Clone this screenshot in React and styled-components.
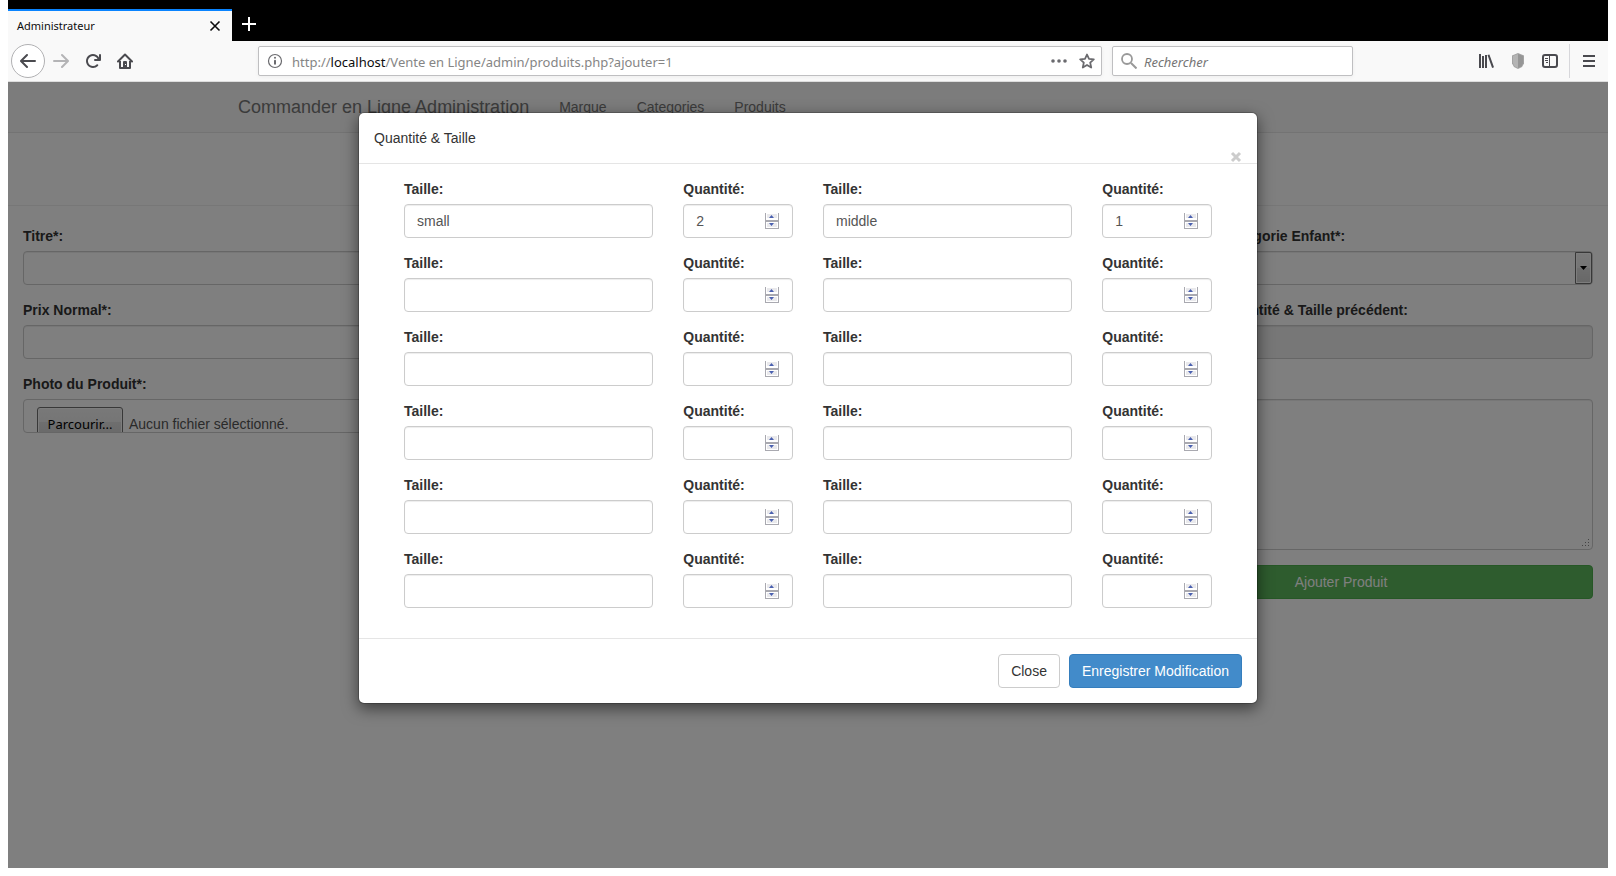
import React from "react";
import styled, { createGlobalStyle } from "styled-components";

const GlobalStyle = createGlobalStyle`
  *, *::before, *::after { box-sizing: border-box; }
  body {
    margin: 0;
    background: #fff;
    color: #333;
    font-family: "Liberation Sans", Arial, sans-serif;
    font-size: 14px;
    line-height: 20px;
  }
  button, input, select, textarea { font: inherit; margin: 0; }
`;

const Browser = styled.div`
  display: flex;
  flex-direction: column;
  min-height: calc(100vh - 8px);
  margin: 0 8px 8px;
`;

/* Browser chrome */

const TabStrip = styled.div`
  display: flex;
  height: 41px;
  padding-top: 9px;
  background: #000;
`;

const Tab = styled.div`
  display: flex;
  align-items: center;
  justify-content: space-between;
  width: 224px;
  padding: 0 11px 0 9px;
  border-top: 2px solid #0a84ff;
  background: #f9f9f9;
  color: #0c0c0d;
  font-family: "Noto Sans", sans-serif;
  font-size: 11px;
`;

const BareButton = styled.button`
  display: flex;
  align-items: center;
  justify-content: center;
  padding: 0;
  border: 0;
  background: none;
  color: inherit;
`;

const NewTabButton = styled(BareButton)`
  width: 34px;
  height: 30px;
  color: #fff;
`;

const Toolbar = styled.div`
  display: flex;
  align-items: center;
  height: 41px;
  padding: 0 3px;
  border-bottom: 1px solid #ddd;
  background: #f9f9f9;
  color: #4a4a4f;
`;

const ToolButton = styled(BareButton)`
  flex: none;
  width: 32px;
  height: 32px;
  color: ${(p) => (p.$dim ? "#b4b4b6" : "#4a4a4f")};
`;

const BackButton = styled(ToolButton)`
  width: 34px;
  height: 34px;
  border: 1px solid #b1b1b3;
  border-radius: 50%;
  background: #fff;
`;

const Spacer = styled.div`
  flex: 0 1 117px;
`;

const Separator = styled.div`
  width: 1px;
  height: 34px;
  margin: 0 3px;
  background: #d7d7db;
`;

const AddressBox = styled.div`
  display: flex;
  align-items: center;
  height: 30px;
  border: 1px solid #bfbfc1;
  border-radius: 2px;
  background: #fff;
  box-shadow: 0 1px 4px rgba(0, 0, 0, 0.05);
  font-family: "Noto Sans", sans-serif;
`;

const UrlBox = styled(AddressBox)`
  flex: 1;
  gap: 9px;
  padding: 0 6px 0 8px;
  color: #6a6a6e;
`;

const UrlActions = styled.div`
  display: flex;
  gap: 12px;
`;

const UrlText = styled.div`
  flex: 1;
  padding-top: 2px;
  color: #858585;
  font-size: 13px;
  white-space: nowrap;

  b {
    color: #0c0c0d;
    font-weight: 400;
  }
`;

const SearchBox = styled(AddressBox)`
  flex: 0 1 241px;
  gap: 7px;
  margin-left: 10px;
  padding: 0 8px;
  color: #999;
`;

const SearchInput = styled.input`
  flex: 1;
  min-width: 0;
  padding: 2px 0 0;
  border: 0;
  outline: 0;
  background: none;
  font-size: 13px;
  font-style: italic;

  &::placeholder { color: #757575; opacity: 1; }
`;

/* Page */

const Page = styled.main`
  position: relative;
  flex: 1;
  background: #fff;
`;

const Navbar = styled.nav`
  border-bottom: 1px solid #e7e7e7;
  background: #f8f8f8;
`;

const NavInner = styled.div`
  display: flex;
  max-width: 1170px;
  margin: 0 auto;
`;

const NavLink = styled.a`
  padding: 15px;
  color: #777;
  font-size: ${(p) => (p.$brand ? "18px" : "14px")};
  text-decoration: none;
`;

const HeadingBand = styled.header`
  height: 73px;
  border-bottom: 1px solid #eee;
`;

const ProductForm = styled.form`
  display: grid;
  grid-template-columns: repeat(4, 1fr);
  padding-top: 20px;
`;

const Field = styled.div`
  grid-column: ${(p) => p.$column || "auto"};
  min-width: 0;
  padding: ${(p) => (p.$unlabelled ? "25px 15px 0" : "0 15px")};
  margin-bottom: 15px;
`;

const Label = styled.label`
  display: block;
  margin-bottom: 5px;
  font-weight: 700;
`;

const Input = styled.input`
  display: block;
  width: 100%;
  height: 34px;
  padding: 6px 12px;
  border: 1px solid #ccc;
  border-radius: 4px;
  outline: 0;
  background: ${(p) => (p.readOnly ? "#eee" : "#fff")};
  box-shadow: inset 0 1px 1px rgba(0, 0, 0, 0.075);
  color: #555;
  appearance: textfield;

  &::-webkit-inner-spin-button { appearance: none; margin: 0; }
`;

const TextArea = styled(Input)`
  height: 151px;
  resize: none;
`;

const Overlaid = styled.div`
  position: relative;
`;

const SelectArrow = styled.span`
  position: absolute;
  top: 1px;
  right: 1px;
  display: flex;
  align-items: center;
  justify-content: center;
  width: 17px;
  height: 32px;
  border: 1px solid #707070;
  border-radius: 0 2px 2px 0;
  background: linear-gradient(#f2f2f2, #ebebeb 50%, #ddd 50%, #cfcfcf);
  box-shadow: inset 0 0 0 1px #fafafa;
  color: #000;
  pointer-events: none;
`;

const Grip = styled.svg`
  position: absolute;
  right: 3px;
  bottom: 3px;
`;

const FilePicker = styled.div`
  display: flex;
  gap: 6px;
  height: 34px;
  padding: 7px 13px 0;
  border: 1px solid #ccc;
  border-radius: 4px;
  overflow: hidden;
  color: #555;
  line-height: 34px;
`;

const FileInput = styled.input`
  position: absolute;
  width: 1px;
  height: 1px;
  opacity: 0;
`;

const FileButton = styled.label`
  flex: none;
  width: 86px;
  height: 34px;
  border: 1px solid #707070;
  border-radius: 3px;
  background: linear-gradient(#f2f2f2, #ebebeb 45%, #ddd 45%, #cfcfcf);
  box-shadow: inset 0 0 0 1px #fafafa;
  color: #000;
  font-family: "Noto Sans", sans-serif;
  font-size: 13px;
  line-height: 32px;
  text-align: center;
`;

const Button = styled.button`
  height: 34px;
  padding: 6px 12px;
  border: 1px solid ${(p) => p.$border};
  border-radius: 4px;
  background: ${(p) => p.$fill};
  color: ${(p) => p.$ink || "#fff"};
  white-space: nowrap;
`;

const SubmitRow = styled.div`
  display: flex;
  grid-column: 1 / -1;
  justify-content: flex-end;
  padding: 0 15px;
`;

const SubmitButton = styled(Button)`
  flex: 0 1 504px;
`;

/* Dialog */

const Backdrop = styled.div`
  position: absolute;
  inset: 0;
  padding: 30px 10px;
  background: rgba(0, 0, 0, 0.5);
`;

const Dialog = styled.section`
  max-width: 900px;
  margin: 0 auto;
  border: 1px solid rgba(0, 0, 0, 0.2);
  border-radius: 6px;
  background: #fff;
  background-clip: padding-box;
  box-shadow: 0 5px 15px rgba(0, 0, 0, 0.5);
`;

const DialogHeader = styled.header`
  display: flex;
  align-items: flex-start;
  justify-content: space-between;
  height: 51px;
  padding: 15px;
  border-bottom: 1px solid #e5e5e5;
`;

const DialogTitle = styled.h4`
  margin: 0;
  font-size: 14px;
  font-weight: 400;
`;

const DialogClose = styled(BareButton)`
  width: 12px;
  height: 22px;
  margin-top: 18px;
  color: #ccc;
`;

const SizeGrid = styled.div`
  display: grid;
  grid-template-columns: 2fr 1fr 2fr 1fr;
  padding: 15px 30px;
`;

const DialogFooter = styled.footer`
  display: flex;
  justify-content: flex-end;
  gap: 9px;
  padding: 15px;
  border-top: 1px solid #e5e5e5;
`;

const Spinner = styled.svg`
  position: absolute;
  top: 9px;
  right: 14px;
  pointer-events: none;
`;

const Icon = ({ size = 16, children }) => (
  <svg width={size} height={size} viewBox="0 0 16 16" fill="currentColor" aria-hidden="true">
    {children}
  </svg>
);

const SpinArrows = () => (
  <Spinner width="14" height="16" viewBox="0 0 14 16" aria-hidden="true">
    <path d="M0 0h14v16H0z" fill="#a9a9b0" />
    <path d="M1 0h12v7H1zM1 9h12v6H1z" fill="#fff" />
    <path d="M2 1h10v4H2zM2 10h10v4H2z" fill="#e9e9ec" />
    <path d="M4 5l2.500-3l2.500 3zM4 10h5l-2.500 3z" fill="#4a60b0" />
  </Spinner>
);

const TextField = ({ id, label, column, children, ...rest }) => (
  <Field $column={column}>
    <Label htmlFor={id}>{label}</Label>
    {children || <Input id={id} {...rest} />}
  </Field>
);

const sizes = [
  { size: "small", qty: "2" },
  { size: "middle", qty: "1" },
  ...Array.from({ length: 10 }, () => ({ size: "", qty: "" })),
];

export default function App() {
  return (
    <Browser>
      <GlobalStyle />
      <TabStrip>
        <Tab>
          <span>Administrateur</span>
          <BareButton aria-label="Fermer l’onglet">
            <svg width="12" height="12" viewBox="0 0 12 12" stroke="currentColor" strokeWidth="1.600" aria-hidden="true">
              <path d="M1.500 1.500l9 9M10.500 1.500l-9 9" />
            </svg>
          </BareButton>
        </Tab>
        <NewTabButton aria-label="Nouvel onglet">
          <svg width="14" height="14" viewBox="0 0 14 14" stroke="currentColor" strokeWidth="2" aria-hidden="true">
            <path d="M7 0v14M0 7h14" />
          </svg>
        </NewTabButton>
      </TabStrip>

      <Toolbar>
        <BackButton aria-label="Précédent">
          <Icon>
            <path d="M15 7H3.414l4.293-4.293a1 1 0 0 0-1.414-1.414l-6 6a1 1 0 0 0 0 1.414l6 6a1 1 0 0 0 1.414-1.414L3.414 9H15a1 1 0 0 0 0-2z" />
          </Icon>
        </BackButton>
        <ToolButton $dim aria-label="Suivant">
          <Icon>
            <path d="M15.707 7.293l-6-6a1 1 0 0 0-1.414 1.414L12.586 7H1a1 1 0 0 0 0 2h11.586l-4.293 4.293a1 1 0 1 0 1.414 1.414l6-6a1 1 0 0 0 0-1.414z" />
          </Icon>
        </ToolButton>
        <ToolButton aria-label="Actualiser">
          <Icon>
            <path d="M15 1a1 1 0 0 0-1 1v2.418A6.995 6.995 0 1 0 8 15a6.954 6.954 0 0 0 4.950-2.050 1 1 0 0 0-1.414-1.414A5.019 5.019 0 1 1 12.549 6H10a1 1 0 0 0 0 2h5a1 1 0 0 0 1-1V2a1 1 0 0 0-1-1z" />
          </Icon>
        </ToolButton>
        <ToolButton aria-label="Accueil">
          <Icon>
            <path d="M1 8.500l7-7 7 7" fill="none" stroke="currentColor" strokeWidth="2" strokeLinecap="round" strokeLinejoin="round" />
            <path d="M3 8v7h10V8" fill="none" stroke="currentColor" strokeWidth="2" strokeLinejoin="round" />
            <path fillRule="evenodd" d="M6 15V9a1 1 0 0 1 1-1h2a1 1 0 0 1 1 1v6zM8 11v1h1v-1z" />
          </Icon>
        </ToolButton>
        <Spacer />
        <UrlBox>
          <Icon>
            <circle cx="8" cy="8" r="6.500" fill="none" stroke="currentColor" strokeWidth="1.200" />
            <circle cx="8" cy="4.800" r="1" />
            <rect x="7" y="6.800" width="2" height="5" rx="1" />
          </Icon>
          <UrlText>
            http://<b>localhost</b>/Vente en Ligne/admin/produits.php?ajouter=1
          </UrlText>
          <UrlActions>
            <BareButton aria-label="Actions de la page">
              <Icon>
                <circle cx="2" cy="8" r="1.800" />
                <circle cx="8" cy="8" r="1.800" />
                <circle cx="14" cy="8" r="1.800" />
              </Icon>
            </BareButton>
            <BareButton aria-label="Marquer cette page">
              <Icon>
                <path d="M8 1.500l2 4.400 4.800.5-3.600 3.200 1 4.900L8 12l-4.200 2.500 1-4.900L1.200 6.400 6 5.900z" fill="none" stroke="currentColor" strokeWidth="1.800" strokeLinejoin="round" />
              </Icon>
            </BareButton>
          </UrlActions>
        </UrlBox>
        <SearchBox>
          <Icon>
            <circle cx="6" cy="6" r="5" fill="none" stroke="currentColor" strokeWidth="1.800" />
            <path d="M10 10l5.500 5.500" stroke="currentColor" strokeWidth="2" />
          </Icon>
          <SearchInput type="text" aria-label="Rechercher" placeholder="Rechercher" />
        </SearchBox>
        <Spacer />
        <ToolButton aria-label="Bibliothèque">
          <Icon>
            <path d="M1 1h2v14H1zM4 3h2v12H4zM7 2h2v13H7zM9.500 2l1.900-.6L16 14.200l-1.900.7z" />
          </Icon>
        </ToolButton>
        <ToolButton aria-label="Protection">
          <Icon>
            <path d="M8 0l6 2.500v8L12 14l-4 2-4-2-2-3.500v-8z" fill="#a3a3a3" />
            <path d="M8 1v14l-3.500-1.700L3 10V3z" fill="#b4b4b4" />
            <path d="M8 1v14l3.500-1.700L13 10V3z" fill="#969696" />
          </Icon>
        </ToolButton>
        <ToolButton aria-label="Panneaux latéraux">
          <Icon>
            <rect x="1" y="2" width="14" height="12" rx="2" fill="none" stroke="currentColor" strokeWidth="2" />
            <path d="M7 2h1v12H7zM3 5h3v1H3zM3 7h3v1H3zM4 9h2v1H4z" />
          </Icon>
        </ToolButton>
        <Separator />
        <ToolButton aria-label="Menu">
          <Icon>
            <path d="M2 2h12v2H2zM2 7h12v2H2zM2 12h12v2H2z" />
          </Icon>
        </ToolButton>
      </Toolbar>

      <Page>
        <Navbar>
          <NavInner>
            <NavLink $brand href="#accueil">Commander en Ligne Administration</NavLink>
            <NavLink href="#marque">Marque</NavLink>
            <NavLink href="#categories">Categories</NavLink>
            <NavLink href="#produits">Produits</NavLink>
          </NavInner>
        </Navbar>
        <HeadingBand />
        <ProductForm>
          <TextField id="titre" label="Titre*:" column="1" />
          <TextField id="enfant" label="Catégorie Enfant*:" column="4">
            <Overlaid>
              <Input as="select" id="enfant" />
              <SelectArrow>
                <svg width="7" height="4" viewBox="0 0 7 4" aria-hidden="true">
                  <path d="M0 0h7L3.500 4z" />
                </svg>
              </SelectArrow>
            </Overlaid>
          </TextField>
          <TextField id="prix" label="Prix Normal*:" column="1" />
          <TextField id="precedent" label="Quantité & Taille précédent:" column="4" readOnly />
          <TextField id="photo" label="Photo du Produit*:" column="1">
            <FilePicker>
              <FileInput id="photo" type="file" />
              <FileButton htmlFor="photo">Parcourir...</FileButton>
              <span>Aucun fichier sélectionné.</span>
            </FilePicker>
          </TextField>
          <Field $column="3 / 5" $unlabelled>
            <Overlaid>
              <TextArea as="textarea" aria-label="Description" />
              <Grip width="8" height="8" viewBox="0 0 8 8" fill="#888" aria-hidden="true">
                <path d="M6 0h1v1H6zM6 3h1v1H6zM3 3h1v1H3zM6 6h1v1H6zM3 6h1v1H3zM0 6h1v1H0z" />
              </Grip>
            </Overlaid>
          </Field>
          <SubmitRow>
            <SubmitButton type="button" $fill="#5cb85c" $border="#4cae4c">Ajouter Produit</SubmitButton>
          </SubmitRow>
        </ProductForm>

        <Backdrop>
          <Dialog role="dialog" aria-labelledby="dialog-title">
            <DialogHeader>
              <DialogTitle id="dialog-title">Quantité &amp; Taille</DialogTitle>
              <DialogClose aria-label="Fermer">
                <svg width="12" height="12" viewBox="0 0 12 12" stroke="currentColor" strokeWidth="3" aria-hidden="true">
                  <path d="M2 2l8 8M10 2l-8 8" />
                </svg>
              </DialogClose>
            </DialogHeader>
            <SizeGrid>
              {sizes.map(({ size, qty }, i) => (
                <React.Fragment key={i}>
                  <TextField id={`taille-${i}`} label="Taille:" type="text" defaultValue={size} />
                  <TextField id={`quantite-${i}`} label="Quantité:">
                    <Overlaid>
                      <Input id={`quantite-${i}`} type="number" min="0" defaultValue={qty} />
                      <SpinArrows />
                    </Overlaid>
                  </TextField>
                </React.Fragment>
              ))}
            </SizeGrid>
            <DialogFooter>
              <Button type="button" $fill="#fff" $border="#ccc" $ink="#333">Close</Button>
              <Button type="button" $fill="#428bca" $border="#357ebd">Enregistrer Modification</Button>
            </DialogFooter>
          </Dialog>
        </Backdrop>
      </Page>
    </Browser>
  );
}
